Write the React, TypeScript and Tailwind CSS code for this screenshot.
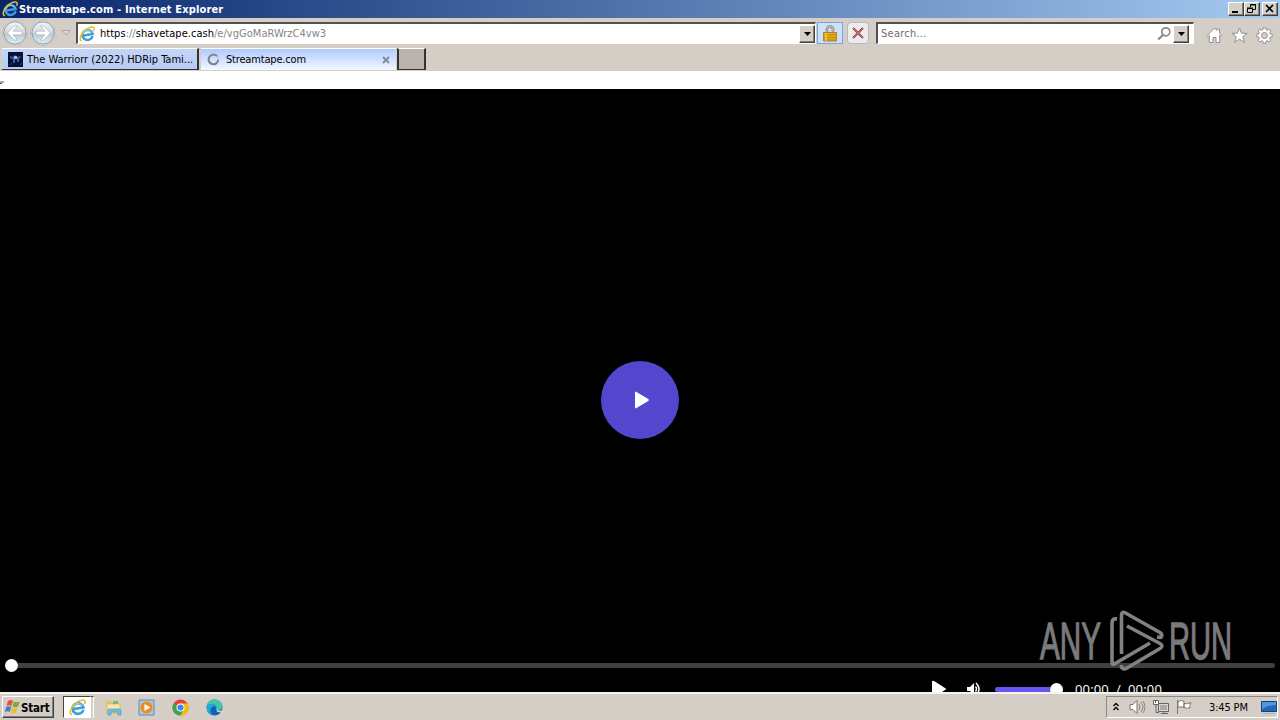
import type { ReactNode } from 'react';

function IeIcon({ size }: { size: number }) {
  return (
    <svg width={size} height={size} viewBox="0 0 16 16" className="shrink-0">
      <g transform="rotate(-9 8 8)">
        <path d="M13.2 11A5.2 5 0 1 1 13.6 8.9H4.5" fill="none" stroke="#3c9fd8" strokeWidth="2.5" />
        <path d="M12.7 7.2A4.6 4.6 0 0 0 4.2 7" fill="none" stroke="#8bd6f8" strokeWidth="1" />
      </g>
      <path d="M3 14.8C-.6 14.4 1.6 7.6 6.4 3.8 10.4.7 15 -.2 15.2 2.6c0 .8-.2 1.5-.6 2.2" fill="none" stroke="#e9bd2c" strokeWidth="1.5" />
    </svg>
  );
}

function NavButton({ back }: { back?: boolean }) {
  return (
    <svg width="26" height="26" viewBox="0 0 26 26" className="shrink-0">
      <defs>
        <linearGradient id={back ? 'navBack' : 'navFwd'} x1="0" y1="0" x2="0" y2="1">
          <stop offset="0" stopColor="#f4f6f7" />
          <stop offset="0.48" stopColor="#d3d9dd" />
          <stop offset="0.52" stopColor="#bdc8cf" />
          <stop offset="1" stopColor="#d9f0f8" />
        </linearGradient>
      </defs>
      <circle cx="13" cy="13" r="12.5" fill="#f7f8f8" stroke="#b4b3b0" strokeWidth="0.8" />
      <circle cx="13" cy="13" r="11.2" fill={back ? 'url(#navBack)' : 'url(#navFwd)'} stroke="#8b969c" />
      <path
        d={back ? 'M5.5 13l7-7h3.2L11 11.2h9v3.6h-9l4.7 5.2h-3.2z' : 'M20.5 13l-7-7h-3.2l4.7 5.2H6v3.6h9L10.3 20h3.2z'}
        fill="#fff"
        stroke="#a3adb3"
        strokeWidth="0.6"
      />
    </svg>
  );
}

function DropButton() {
  return (
    <div className="flex h-[18px] w-4 items-center justify-center border border-t-white border-r-[#404040] border-b-[#404040] border-l-white bg-[#d4d0c8] shadow-[inset_-1px_-1px_#808080]">
      <svg width="7" height="4"><path d="M0 0h7L3.5 4z" fill="#000" /></svg>
    </div>
  );
}

function CaptionButton({ children }: { children: ReactNode }) {
  return (
    <div className="h-[14px] w-4 border border-t-white border-r-[#404040] border-b-[#404040] border-l-white bg-[#d4d0c8] shadow-[inset_-1px_-1px_#808080]">
      <svg width="14" height="12" viewBox="0 0 14 12" fill="none" stroke="#000">{children}</svg>
    </div>
  );
}

function TitleBar() {
  return (
    <div className="flex h-[18px] items-center bg-linear-to-r from-[#0a246a] to-[#a6caf0] pr-[2px] pl-[2px]">
      <IeIcon size={16} />
      <span className="mt-px ml-px flex-1 text-[11px] font-bold tracking-[0.15px] text-white">Streamtape.com - Internet Explorer</span>
      <CaptionButton><path d="M3 9h6" strokeWidth="2" /></CaptionButton>
      <CaptionButton>
        <path d="M5.5 4V1.5h5v5H8M5 2h6M2.5 5.5h5v4h-5zM2 5h6" />
      </CaptionButton>
      <div className="ml-[2px]">
        <CaptionButton><path d="M3 2l7 7M10 2L3 9" strokeWidth="1.6" /></CaptionButton>
      </div>
    </div>
  );
}

function AddressBar() {
  return (
    <div className="flex h-[30px] items-center pl-[2px]">
      <div className="flex w-[74px] items-center gap-[2px]">
        <NavButton back />
        <NavButton />
        <svg width="10" height="6" className="ml-[3px]"><path d="M1 .5h8L5 5z" fill="#d9d7d1" stroke="#aaa8a4" /></svg>
      </div>
      <div className="flex h-[22px] w-[740px] items-center border-t-2 border-r border-b border-l-2 border-t-[#55514c] border-r-white border-b-white border-l-[#55514c] bg-white pl-px">
        <IeIcon size={16} />
        <span className="mt-px ml-[5px] flex-1 text-[11px] tracking-[0.03px] text-[#858585]">
          <span className="text-black">https</span>://<span className="text-black">shavetape.cash</span>/e/vgGoMaRWrzC4vw3
        </span>
        <DropButton />
      </div>
      <div className="ml-px flex h-[22px] w-[26px] items-center justify-center border border-[#78a5dc] bg-[#cce1fb]">
        <svg width="14" height="17" viewBox="0 0 14 17">
          <path d="M4 8V4.5a3 3 0 0 1 6 0V8" fill="none" stroke="#867c5c" strokeWidth="2.6" />
          <path d="M4 8V4.5a3 3 0 0 1 6 0V8" fill="none" stroke="#ddd7bd" />
          <path d="M.5 7.5h13v8.5H.5z" fill="#e5ac22" stroke="#b38416" />
          <path d="M1 10h12M1 12.5h12M1 15h12" stroke="#bd850e" />
          <path d="M3 8v8" stroke="#ffe36b" />
        </svg>
      </div>
      <div className="ml-1 flex h-[22px] w-[22px] items-center justify-center rounded-sm border border-[#b9b8bd] bg-[#ececef]">
        <svg width="12" height="12" fill="none">
          <path d="M1 1l10 10M11 1L1 11" stroke="#873b40" strokeWidth="2" />
          <path d="M1 1l10 10M11 1L1 11" stroke="#e2656c" />
        </svg>
      </div>
      <div className="ml-[7px] flex h-[22px] w-[318px] items-center border-t-2 border-r border-b border-l-2 border-t-[#55514c] border-r-white border-b-white border-l-[#55514c] bg-white pr-1 pl-[3px]">
        <span className="mt-px flex-1 text-[11px] tracking-[0.25px] text-[#6d6d6d]">Search...</span>
        <svg width="15" height="15" fill="none" stroke="#8a8a8a" className="mr-px">
          <circle cx="8.8" cy="5.8" r="4" strokeWidth="1.7" />
          <path d="M6 9L1.2 13.5" strokeWidth="2.2" />
        </svg>
        <DropButton />
      </div>
      <div className="mt-1 ml-[12px] flex gap-2">
        <svg width="17" height="17" viewBox="0 0 17 17" fill="#fff" stroke="#929292">
          <path d="M1 8.7L8.5 1 11 3.4V2h2.5v4L16 8.7l-1 1-1.3-1.3v7.1H10v-5H7v5H3.3V8.4L2 9.7z" />
        </svg>
        <svg width="17" height="17" viewBox="0 0 17 17" fill="#fff" stroke="#929292">
          <path d="M8.5 1l2 5.2 5.6.1-4.4 3.5 1.7 5.5-4.9-3.2-4.9 3.2 1.7-5.5L.9 6.3l5.6-.1z" />
        </svg>
        <svg width="17" height="17" viewBox="0 0 17 17" fill="#fff" stroke="#929292">
          <path d="M7 .8h3v2l1.5.6L13 2l2 2-1.4 1.5.6 1.5h2v3h-2l-.6 1.5L15 13l-2 2-1.5-1.4-1.5.6v2H7v-2l-1.5-.6L4 15l-2-2 1.4-1.5L2.8 10h-2V7h2l.6-1.5L2 4l2-2 1.5 1.4L7 2.8z" />
          <circle cx="8.5" cy="8.5" r="3" fill="#d4cec8" />
        </svg>
      </div>
    </div>
  );
}

function TabStrip() {
  return (
    <div className="flex h-[23px] pl-[2px] text-[11px] text-black">
      <div className="flex h-[22px] w-[197px] items-center border-t border-r-2 border-b border-t-white border-r-[#35332f] border-b-[#35332f] bg-linear-to-b from-[#c4d5f6] to-[#b7cbf5] pl-[6px]">
        <svg width="15" height="15">
          <path d="M0 0h15v15H0z" fill="#061335" />
          <path d="M2 4l3 1 2-2 2 2 4-1-2 3v3H9V7H7v4H5V7L2 6z" fill="#385f9f" />
          <path d="M6 4h3v3H6z" fill="#9bb8e5" />
          <path d="M1 13l3-2M12 13l2-2" stroke="#1c427d" />
        </svg>
        <span className="mt-[2px] ml-1 whitespace-nowrap tracking-[-0.02px]">The Warriorr (2022) HDRip Tami...</span>
      </div>
      <div className="ml-[2px] flex h-[22px] w-[195px] items-center border-t border-white bg-linear-to-b from-[#afcaff] to-[#f4f7ff] pl-[6px]">
        <svg width="13" height="13" fill="none">
          <circle cx="6.5" cy="6.5" r="4.8" stroke="#c1c8d5" strokeWidth="2" />
          <path d="M10 3.2A4.8 4.8 0 1 0 11.2 7" stroke="#7c838b" strokeWidth="2" />
        </svg>
        <span className="mt-px ml-[6px] flex-1 tracking-[-0.18px]">Streamtape.com</span>
        <svg width="8" height="8" className="mr-[6px]"><path d="M1 1l6 6M7 1L1 7" stroke="#7e8999" strokeWidth="1.8" /></svg>
      </div>
      <div className="ml-px h-[22px] w-[29px] border-t border-r-2 border-b border-l-2 border-t-white border-r-[#35332f] border-b-[#35332f] border-l-[#35332f] bg-[#bab3ac]" />
    </div>
  );
}

function AnyRunMark() {
  return (
    <svg width="200" height="66" viewBox="0 0 200 66" className="absolute top-[519px] left-[1037px]">
      <g fill="#7a7a7a" stroke="#7a7a7a" strokeWidth="1.3" fontFamily="Liberation Sans Narrow, Liberation Sans, sans-serif" fontSize="52">
        <text x="3" y="50.5" textLength="61" lengthAdjust="spacingAndGlyphs">ANY</text>
        <text x="132" y="50.5" textLength="63" lengthAdjust="spacingAndGlyphs">RUN</text>
      </g>
      <g fill="none" stroke="#828282" strokeWidth="3.6" strokeLinejoin="round">
        <path d="M80 11Q75 10 75 15V54Q75 58 79 55L113 35" />
        <path d="M84.5 46V7Q84.5 3 88.5 5L123 24.5Q126 27 124 29.5L120 29" />
        <path d="M90 18L123 35.5Q127 38 123 40.5L90 60Q87 62 84.5 59.5V57" />
      </g>
    </svg>
  );
}

function Player() {
  return (
    <main className="relative flex h-[603px] flex-col overflow-hidden bg-black">
      <button className="absolute top-[272px] left-[601px] flex h-[78px] w-[78px] items-center justify-center rounded-full bg-[#5547cd]">
        <svg width="18" height="20" className="ml-1"><path d="M2 2.5v15Q2 19 3.5 18l11.8-7q1.3-1 0-2L3.5 2Q2 1 2 2.5z" fill="#fff" /></svg>
      </button>
      <div className="mt-[570px] flex h-[13px] shrink-0 items-center px-[5px]">
        <div className="h-[13px] w-[13px] rounded-full bg-white" />
        <div className="h-[5px] flex-1 rounded-r-full bg-[#404040]" />
      </div>
      <div className="mt-[7px] flex h-5 shrink-0 items-center pl-[931px]">
        <svg width="16" height="20"><path d="M1 3v14q0 2 2 1l11-7q2-1 0-2L3 2Q1 1 1 3z" fill="#fff" /></svg>
        <svg width="18" height="18" className="ml-[18px]">
          <path d="M2 7h3l4-4v12l-4-4H2z" fill="#fff" />
          <path d="M10.5 6.5q2 2.5 0 5M11 3q6 6 0 12" fill="none" stroke="#fff" strokeWidth="1.5" />
        </svg>
        <div className="ml-3 flex h-[13px] w-[68px] items-center">
          <div className="h-[5px] w-[56px] rounded-l-full bg-[#6556ef]" />
          <div className="h-[13px] w-[13px] shrink-0 rounded-full bg-white" />
        </div>
        <span className="ml-3 whitespace-pre font-['Open_Sans'] text-[13px] tracking-[0.16px] text-white">00:00  /  00:00</span>
      </div>
      <AnyRunMark />
    </main>
  );
}

function TaskbarApps() {
  return (
    <div className="flex items-center">
      <div className="ml-[9px] flex h-[22px] w-[28px] items-center justify-center border border-t-[#44413e] border-r-white border-b-white border-l-[#44413e] bg-white">
        <IeIcon size={17} />
      </div>
      <div className="h-[22px] w-[3px] border-t border-r border-t-[#44413e] border-r-white" />
      <svg width="17" height="17" className="ml-[11px]">
        <path d="M1 3q0-1 1-1h4l1 2h7v11H1z" fill="#dec876" />
        <path d="M2 5h13v7H2z" fill="#f7e9a9" stroke="#d3b65d" strokeWidth=".7" />
        <path d="M8 2h5v3H8z" fill="#83b86c" />
        <path d="M3 16v-5q0-1 1-1h10q2 0 2 2v4h-3v-3H6v3H3z" fill="#73bde1" stroke="#4b91be" strokeWidth=".6" />
      </svg>
      <svg width="17" height="17" className="ml-[16px]">
        <path d="M1 1h15v15H1z" fill="#a6c8e9" stroke="#638cb5" />
        <circle cx="8.5" cy="8.5" r="6" fill="#f28a16" />
        <path d="M6.5 5l6 3.5-6 3.5z" fill="#fff" />
      </svg>
      <svg width="17" height="17" viewBox="0 0 17 17" className="ml-[17px]">
        <circle cx="8.5" cy="8.5" r="8" fill="#ea4335" />
        <path d="M8.5 8.5L1.4 4.8A8 8 0 0 0 8 16.5l4-6z" fill="#34a853" />
        <path d="M8.5 4.5h7A8 8 0 0 1 8 16.5l4.1-6.2z" fill="#fbbc05" />
        <circle cx="8.5" cy="8.5" r="4" fill="#fff" />
        <circle cx="8.5" cy="8.5" r="3.1" fill="#4285f4" />
      </svg>
      <svg width="17" height="17" viewBox="0 0 17 17" className="ml-[17px]">
        <circle cx="8.5" cy="8.5" r="8" fill="#0b65b5" />
        <path d="M.6 7Q2 .5 8.8.5 15 .8 16.5 6.5c.5 3.5-2.2 5-6 4.3-1.1-.5-.5-1.3-.2-1.8C11.3 6 6 3 .6 7z" fill="#45c6a4" />
        <path d="M.5 8Q2 4 7 4.8q3.5 1 3.4 3.8C8.3 5.5 4 8 4.3 12q.5 3 3.3 4.4Q1.2 15.6.5 8z" fill="#22a6dc" />
        <path d="M10.5 10c1 1.5 3.5 2 6 .9l.5 2.3-2 .6-4-1z" fill="#d4cec7" />
      </svg>
    </div>
  );
}

function Taskbar() {
  return (
    <footer className="flex h-7 items-center border-t-2 border-[#f5f3f0] bg-[#d4cec7] pr-[2px] pl-[2px]">
      <div className="flex h-[22px] w-[52px] items-center border border-t-white border-r-[#404040] border-b-[#404040] border-l-white pl-px shadow-[inset_-1px_-1px_#808080]">
        <svg width="17" height="16" viewBox="0 0 17 16">
          <path d="M4 2q3-2 5 0L7.5 7Q5 5.5 2.5 7z" fill="#e6532c" />
          <path d="M10 2.5q3 1.5 6 0L14 7.5q-3 1.5-5.5 0z" fill="#77ad38" />
          <path d="M2.2 8q3-1.5 5 0L5.8 13Q3.5 11.5.8 13z" fill="#3c83cb" />
          <path d="M8.2 8.5q2.5 1.5 5.5 0L12 13.5q-3 1.5-5.3 0z" fill="#edbd28" />
        </svg>
        <span className="mt-px text-[11.5px] font-bold tracking-[-0.2px] text-black">Start</span>
      </div>
      <TaskbarApps />
      <div className="ml-auto flex h-[22px] w-[172px] items-center border border-t-[#8d8881] border-r-white border-b-white border-l-[#8d8881] pl-[6px]">
        <svg width="7" height="10" fill="none" stroke="#000" strokeWidth="1.3"><path d="M.5 4l2.5-2.5L5.500 4M.5 8L3 5.5 5.500 8" /></svg>
        <svg width="17" height="16" className="ml-[9px]">
          <path d="M1 5.5h3l4-4v13l-4-4H1z" fill="#fff" stroke="#777" />
          <path d="M10 5q2 3 0 6M12 3q4 5 0 10M14 2q4 6 0 12" fill="none" stroke="#888" />
        </svg>
        <svg width="17" height="17" className="ml-[7px]">
          <path d="M5.500 4.500h10v8h-10z" fill="#aaa9a7" stroke="#666" />
          <path d="M6.500 5.500h8v6h-8z" fill="none" stroke="#eee" strokeWidth=".7" />
          <path d="M8 14.500h7M11 13v2" stroke="#666" />
          <path d="M.5 1.500h5v4h-5z" fill="#fff" stroke="#666" />
          <path d="M2.500 1v3M3 6v7.500h3" fill="none" stroke="#666" />
        </svg>
        <svg width="17" height="16" className="ml-[6px]" fill="#fff" stroke="#777">
          <path d="M1.500 1v14M2 2.500q4-2 6 0v6q-3-1.500-6 0zM8 4.500q3 1 7-1l-1.500 4 1 1q-3 1.500-6.500 0z" />
        </svg>
        <span className="mt-px ml-[16px] text-[11px] tracking-[-0.15px] whitespace-nowrap text-black">3:45 PM</span>
        <svg width="16" height="15" className="ml-auto">
          <path d="M.5 1.500h15v10H.5z" fill="#2268b4" stroke="#174176" />
          <path d="M1 2h14v3Q7 5 1 9z" fill="#4f99dc" />
          <path d="M2 13.500h12" stroke="#9cb6ce" />
        </svg>
      </div>
    </footer>
  );
}

export default function App() {
  return (
    <div className="flex h-[720px] w-[1280px] flex-col overflow-hidden bg-white font-['DejaVu_Sans_Condensed','DejaVu_Sans',sans-serif] leading-[14px]">
      <TitleBar />
      <header className="h-[53px] shrink-0 bg-[#d4cec7]">
        <AddressBar />
        <TabStrip />
      </header>
      <div className="h-[18px] shrink-0 pt-[10px]">
        <svg width="4" height="4"><path d="M0 1h4M0 2.5h2" stroke="#555" /></svg>
      </div>
      <Player />
      <Taskbar />
    </div>
  );
}
